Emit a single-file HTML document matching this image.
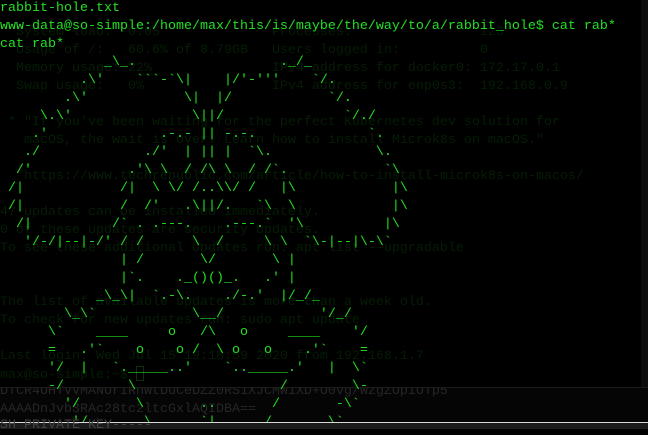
<!DOCTYPE html>
<html><head><meta charset="utf-8">
<style>
html,body{margin:0;padding:0;}
body{width:648px;height:429px;background:#000;position:relative;overflow:hidden;}
pre{margin:0;position:absolute;left:0;font-family:"Liberation Mono",monospace;font-size:13.33px;line-height:18px;white-space:pre;}
#strip{position:absolute;left:641px;top:0;width:7px;height:387px;background:#0c0c0c;}
#faint{top:-12px;color:#051d05;}
#lower{position:absolute;left:0;top:387px;width:648px;height:35px;background:#050505;border-top:1px solid #1c1c1c;overflow:hidden;}
#lowtxt{top:-5px;color:#262626;}
#bar{position:absolute;left:0;top:422px;width:648px;height:7px;background:#1b1b1b;border-top:1px solid #d8d8d8;box-sizing:border-box;}
#art{top:0;color:#22e022;}
#pk{top:417px;color:#444;}
.cur{display:inline-block;width:8px;height:15px;border:1px solid #0e2e0e;box-sizing:border-box;vertical-align:-3px;}
</style></head><body>
<div id="strip"></div>
<pre id="faint">  System information as of Sun Jul 11 18:23:18 UTC 2021

  System load:  0.05              Processes:                123
  Usage of /:   60.6% of 8.79GB   Users logged in:          0
  Memory usage: 22%               IPv4 address for docker0: 172.17.0.1
  Swap usage:   0%                IPv4 address for enp0s3:  192.168.0.9

 * "If you've been waiting for the perfect Kubernetes dev solution for
   macOS, the wait is over. Learn how to install Microk8s on macOS."

   https://www.techrepublic.com/article/how-to-install-microk8s-on-macos/

47 updates can be installed immediately.
0 of these updates are security updates.
To see these additional updates run: apt list --upgradable


The list of available updates is more than a week old.
To check for new updates run: sudo apt update

Last login: Wed Jul 15 19:18:59 2020 from 192.168.1.7
max@so-simple:~$ <span class="cur"></span></pre>
<div id="lower"><pre id="lowtxt">DTCR4UHTVVMANUrIRhWtDuCeDZZ0RS1XJCMW1XD+U0vg/WzgZUpiUTp5
AAAADnJvb3RAc28tc2ltcGxlAQIDBA==</pre></div>
<pre id="art">rabbit-hole.txt
www-data@so-simple:/home/max/this/is/maybe/the/way/to/a/rabbit_hole$ cat rab*
cat rab*
             _\_.                  ._/_
          .\'    &#96;&#96;&#96;-&#96;\|    |/'-'''    &#96;/.
        .\'            \|  |/            &#96;/.
     \.\'               \||/               &#96;/./
    .'              .-.- || -.-.              &#96;.
   ./             ./'  | || |  &#96;\.             \.
  /'            .'\ \  / /\ \  / /&#96;.            &#96;\
 /|            /|  \ \/ /..\\/ /   |\            |\
 /|            /  /'   .\||/.   &#96;\  \            |\
  /|          /&#96; . .---.    .---.&#96;  '\          |\
   '/-/|--|-/' / /      \  /     \ \  &#96;\-|--|\-\&#96;
               | /       \/       \ |
               |&#96;.    ._()()_.   .' |
            _\_\|  &#96;.-\.    ./-.'  |/_/_
        \_\&#96;            \__/            '/_/
      \&#96;    ____     o   /\   o     ____    '/
      =   .'&#96;    o    o /  \ o   o    .'&#96;    =
      '/  |   &#96;._____..'    &#96;.._____.'   |  \&#96;
      -/        \                  /        \-
        '/       \       ..       /       -\&#96;
         '/       \      &#96;|      /       \&#96;</pre>
<div id="bar"></div>
<pre id="pk">SH PRIVATE KEY-----</pre>
</body></html>
